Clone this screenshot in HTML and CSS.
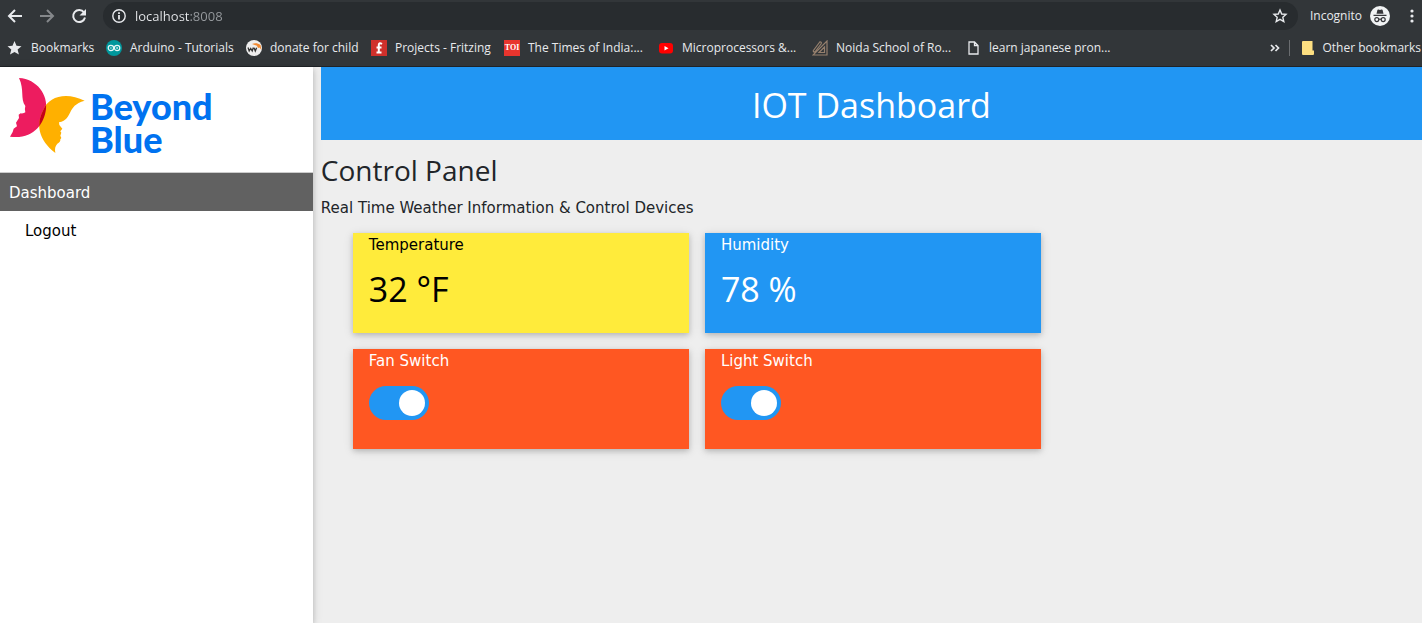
FILE: index.html
```html
<!DOCTYPE html>
<html lang="en">
<head>
<meta charset="utf-8">
<meta name="viewport" content="width=device-width, initial-scale=1">
<title>IOT Dashboard</title>
<link rel="stylesheet" href="styles.css">
</head>
<body>
<header class="browser">
  <div class="toolbar">
    <button class="icon-button" type="button" aria-label="Back"><svg width="16" height="16" viewBox="0 0 16 16"><path class="stroke" d="M15 8H2M8 2 2 8l6 6"/></svg></button>
    <button class="icon-button icon-dim" type="button" aria-label="Forward"><svg width="16" height="16" viewBox="0 0 16 16"><path class="stroke" d="M1 8h13M8 2l6 6-6 6"/></svg></button>
    <button class="icon-button" type="button" aria-label="Reload"><svg width="16" height="16" viewBox="0 0 16 16"><path class="stroke" d="M13 4.400A6 6 0 1 0 14 9.500"/><path fill="currentColor" d="M15 1v6.500H8.500z"/></svg></button>
    <div class="omnibox">
      <button class="icon-button" type="button" aria-label="Site information"><svg width="16" height="16" viewBox="0 0 16 16"><circle class="thin" cx="8" cy="8" r="6.200"/><path fill="currentColor" d="M7.100 7h1.800v4.500H7.100zM7.100 4.300h1.800v1.700H7.100z"/></svg></button>
      <input class="address" type="text" value="localhost:8008" aria-label="Address">
      <button class="icon-button" type="button" aria-label="Bookmark this page"><svg width="16" height="16" viewBox="0 0 16 16"><path class="thin" d="m8 2 1.700 4 4.300.400-3.200 2.900 1 4.300L8 11.300l-3.800 2.300 1-4.300L2 6.400 6.300 6z"/></svg></button>
    </div>
    <button class="profile" type="button">Incognito
      <svg width="20" height="20" viewBox="0 0 20 20"><circle cx="10" cy="10" r="10" fill="#f1f3f4"/><g fill="#35363a"><path d="M6.500 7.800 7.400 4c.1-.5.600-.7 1-.5l1.600.5 1.600-.5c.4-.2.900 0 1 .5l.9 3.800zM3.500 8.800h13v1.100h-13z"/></g><g fill="none" stroke="#35363a" stroke-width="1.200"><circle cx="6.800" cy="13.600" r="2"/><circle cx="13.200" cy="13.600" r="2"/><path d="M8.800 13.400q1.200-.8 2.400 0"/></g></svg>
    </button>
    <button class="icon-button menu-button" type="button" aria-label="Menu"><svg width="4" height="16" viewBox="0 0 4 16" fill="currentColor"><circle cx="2" cy="3" r="1.600"/><circle cx="2" cy="8" r="1.600"/><circle cx="2" cy="13" r="1.600"/></svg></button>
  </div>
  <nav class="bookmarks" aria-label="Bookmarks">
    <div class="bookmark-list">
      <a class="bookmark" href="#"><svg width="16" height="16" viewBox="0 0 16 16"><path fill="#e8eaed" d="m7.500 1 2 4.800 5 .4-3.900 3.400 1.300 5-4.400-2.700L3 14.600l1.300-5L.5 6.200l5-.4z"/></svg>Bookmarks</a>
      <a class="bookmark" href="#"><svg width="16" height="16" viewBox="0 0 16 16"><circle cx="8" cy="8" r="8" fill="#00979c"/><g fill="none" stroke="#e6f7f7" stroke-width="1.200"><circle cx="4.900" cy="8" r="2.700"/><circle cx="11.100" cy="8" r="2.700"/></g><path stroke="#e6f7f7" stroke-width=".8" d="M4 8h1.800M10.200 8H12M11.100 7.100v1.800"/></svg>Arduino - Tutorials</a>
      <a class="bookmark" href="#"><svg width="16" height="16" viewBox="0 0 16 16"><circle cx="8" cy="8" r="8" fill="#eee"/><path fill="#f28a32" d="M6 4c3-1.200 6-.8 8.500 1L15.500 10 13.500 7.500 12 8 11 5.800z"/><path fill="none" stroke="#333" stroke-width="1.300" d="m2 7.500 1.200 3.500L4.700 8.500 6.200 11l1.200-3.500M8 7.800l1.300 3.200 1.300-3.200"/></svg>donate for child</a>
      <a class="bookmark" href="#"><svg width="16" height="16" viewBox="0 0 16 16"><path fill="#d0302b" d="M0 0h16v16H0z"/><path fill="none" stroke="#fff" stroke-width="2" d="M11 4C8.500 2.500 7.800 3.500 7.800 5v7M5.500 7.500h5M5.500 12.500h5"/></svg>Projects - Fritzing</a>
      <a class="bookmark" href="#"><span class="toi-icon">TOI</span>The Times of India:...</a>
      <a class="bookmark" href="#"><svg width="16" height="16" viewBox="0 0 16 16"><rect x="1" y="3" width="14" height="10.500" rx="3" fill="#f00"/><path fill="#fff" d="m6.500 6 4 2.200-4 2.300z"/></svg>Microprocessors &amp;...</a>
      <a class="bookmark" href="#"><svg width="16" height="16" viewBox="0 0 16 16" fill="none" stroke="#96806e" stroke-width="1.200"><path d="M15 1v14H1zM12.500 7v5.500H7zM1 11l6-8M2.500 12.500 9 4M1 11l1.500 1.500M7 3c1-2 3-1 2 1"/></svg>Noida School of Ro...</a>
      <a class="bookmark" href="#"><svg width="14" height="16" viewBox="0 0 14 16"><path fill="none" stroke="#e8eaed" stroke-width="1.300" d="M2 2h5.500L11 5.500V14H2zM7.500 2v3.500H11"/></svg>learn japanese pron...</a>
    </div>
    <button class="icon-button" type="button" aria-label="More bookmarks"><svg width="10" height="10" viewBox="0 0 10 10"><path fill="none" stroke="currentColor" stroke-width="1.700" d="m1 2 3 3-3 3M5.500 2l3 3-3 3"/></svg></button>
    <a class="bookmark other" href="#"><svg width="12" height="14" viewBox="0 0 12 14"><path fill="#fddf81" d="M0 1q0-1 1-1h9.500v9.500H12V13q0 1-1 1H1q-1 0-1-1z"/></svg>Other bookmarks</a>
  </nav>
</header>
<div class="app">
  <aside class="sidebar">
    <a class="logo" href="#">
      <svg width="77" height="77" viewBox="27 21 231 231" aria-hidden="true">
        <defs><clipPath id="wing"><path d="M57 24C112 27 144 76 138 117 132 165 98 209 30 200L38 186 41 176 51 169 48 158 57 144 56 134 62 130Q72 131 76 127 73 118 76 108C60 86 74 60 57 24z"/></clipPath></defs>
        <path fill="#ed1c5f" d="M57 24C112 27 144 76 138 117 132 165 98 209 30 200L38 186 41 176 51 169 48 158 57 144 56 134 62 130Q72 131 76 127 73 118 76 108C60 86 74 60 57 24z"/>
        <path fill="#ffb000" d="M254 92C200 65 145 78 130 120 107 163 115 209 166 249 164 237 165 228 172 221Q182 217 181 208L184 204 181 197 184 188 181 184 187 176 178 165 177 157C223 146 196 108 254 92z"/>
        <path fill="#c40019" clip-path="url(#wing)" d="M254 92C200 65 145 78 130 120 107 163 115 209 166 249z"/>
      </svg>
      <span class="logo-text">Beyond<br>Blue</span>
    </a>
    <nav class="side-nav" aria-label="Main">
      <a class="side-link active" href="#">Dashboard</a>
      <a class="side-link nested" href="#">Logout</a>
    </nav>
  </aside>
  <main class="content">
    <h1 class="banner">IOT Dashboard</h1>
    <h2 class="title">Control Panel</h2>
    <p class="lead">Real Time Weather Information &amp; Control Devices</p>
    <div class="cards">
      <section class="card yellow"><h3 class="label">Temperature</h3><p class="value">32 °F</p></section>
      <section class="card blue"><h3 class="label">Humidity</h3><p class="value">78 %</p></section>
      <section class="card orange first"><label class="label" for="fan">Fan Switch</label><input class="switch" type="checkbox" id="fan" checked></section>
      <section class="card orange"><label class="label" for="light">Light Switch</label><input class="switch" type="checkbox" id="light" checked></section>
    </div>
  </main>
</div>
</body>
</html>
```
FILE: styles.css
```css
* { box-sizing: border-box; }
body {
  margin: 0;
  min-height: 100vh;
  display: flex;
  flex-direction: column;
  background: #eee;
  color: #212529;
  font: 15px/23px "DejaVu Sans", Verdana, sans-serif;
}
a { color: inherit; text-decoration: none; }
h1, h2, h3, p { margin: 0; font-weight: 400; }
svg { display: block; flex: none; }
button { border: 0; padding: 0; background: none; color: inherit; font: inherit; }

.browser {
  background: #323639;
  border-bottom: 1px solid #202327;
  color: #e8eaed;
  font: 12px/18px "Open Sans", "Noto Sans", sans-serif;
}
.toolbar { display: flex; align-items: center; height: 32px; padding: 0 8px 0 7px; gap: 16px; }
.icon-button { display: flex; flex: none; }
.icon-dim { color: #85888b; }
.stroke { fill: none; stroke: currentColor; stroke-width: 2; }
.thin { fill: none; stroke: currentColor; stroke-width: 1.4; }
.omnibox {
  flex: 1;
  min-width: 0;
  display: flex;
  align-items: center;
  gap: 8px;
  height: 28px;
  margin-right: -4px;
  padding: 0 10px 0 8px;
  border-radius: 14px;
  background: #282c2f;
}
.address {
  flex: 1;
  min-width: 0;
  border: 0;
  padding: 0;
  font: 13px/20px "Open Sans", "Noto Sans", sans-serif;
  color: transparent;
  background: linear-gradient(90deg, #e8eaed 55px, #979b9f 55px);
  -webkit-background-clip: text;
  background-clip: text;
}
.profile { display: flex; align-items: center; gap: 8px; }
.menu-button { padding-left: 4px; }
.bookmarks { display: flex; align-items: center; height: 34px; padding: 0 1px 2px 7px; }
.bookmark-list {
  flex: 1;
  display: grid;
  grid-template-columns: 99px 140px 125px 133px 154px 154px 155px auto;
}
.bookmark { display: flex; align-items: center; gap: 8px; white-space: nowrap; }
.toi-icon {
  width: 16px;
  background: #e8352e;
  color: #fff;
  font: 700 8px/16px "Liberation Serif", serif;
  text-align: center;
}
.other { margin-left: 9px; padding-left: 12px; border-left: 1px solid #6a6d70; line-height: 16px; }

.app { flex: 1; display: flex; }
.sidebar {
  width: 22%;
  background: #fff;
  color: #000;
  box-shadow: 0 2px 5px rgba(0, 0, 0, .16), 0 2px 10px rgba(0, 0, 0, .12);
}
.logo { display: flex; gap: 4px; height: 105px; padding: 10px 9px; }
.logo-text { padding-top: 13px; color: #0072f0; font: 900 36px/33px Lato, sans-serif; }
.side-nav { border-top: 1px solid #ccc; }
.side-link { display: block; padding: 9px 9px 6px; }
.side-link.active { background: #616161; color: #fff; }
.side-link.nested { padding-left: 25px; }

.content { flex: 1; min-width: 0; padding-left: 8px; }
.banner {
  padding: 13px 0 10px;
  background: #2196f3;
  color: #fff;
  font: 34px/50px "Open Sans", "Noto Sans", sans-serif;
  text-align: center;
}
.title { padding: 10px 0 7px; font: 28px/40px "Open Sans", "Noto Sans", sans-serif; }
.lead { padding-bottom: 13px; }
.cards {
  display: grid;
  grid-template-columns: repeat(3, 1fr);
  gap: 16px;
  padding: 0 29px 16px 32px;
}
.card {
  min-height: 100px;
  padding: 1px 16px 0;
  color: #fff;
  box-shadow: 0 2px 5px rgba(0, 0, 0, .16), 0 2px 10px rgba(0, 0, 0, .12);
}
.first { grid-column: 1; }
.yellow { background: #ffeb3b; color: #000; }
.blue { background: #2196f3; }
.orange { background: #ff5722; }
.label { display: block; font-size: 15px; }
.value { padding-top: 8px; font: 34px/48px "Open Sans", "Noto Sans", sans-serif; }
.switch {
  appearance: none;
  display: flex;
  width: 60px;
  height: 34px;
  margin: 13px 0 0;
  padding: 4px;
  border-radius: 17px;
  background: #ccc;
}
.switch::before { content: ""; width: 26px; height: 26px; border-radius: 50%; background: #fff; }
.switch:checked { justify-content: flex-end; background: #2196f3; }
```
